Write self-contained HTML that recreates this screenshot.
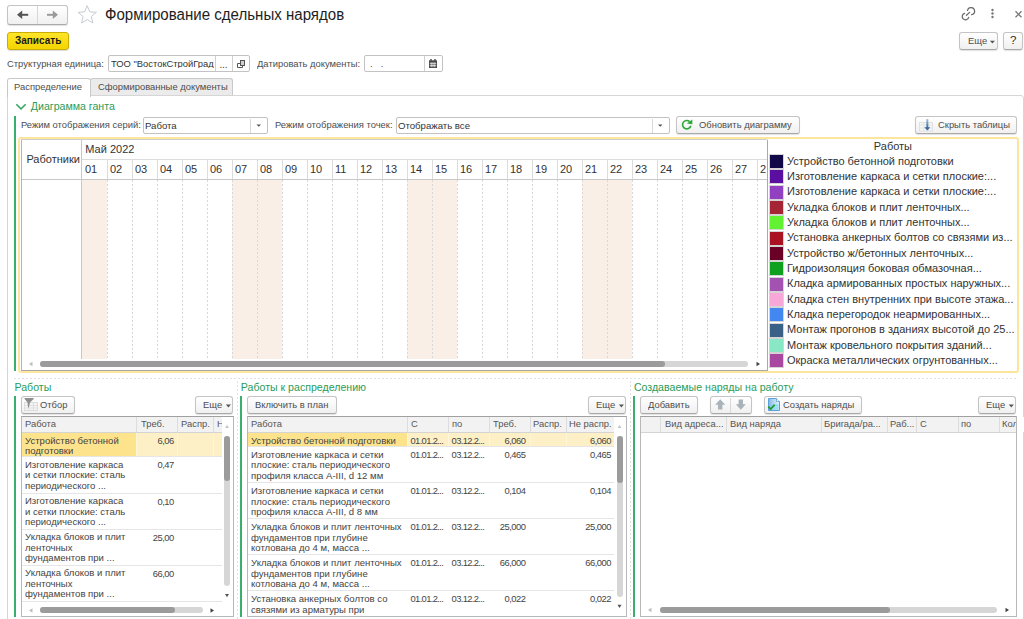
<!DOCTYPE html><html><head><meta charset="utf-8"><style>
html,body{margin:0;padding:0;background:#fff;width:1024px;height:619px;overflow:hidden;position:relative;font-family:"Liberation Sans",sans-serif;color:#4d4d4d}
.t{position:absolute;line-height:1;white-space:nowrap}
.r{position:absolute;box-sizing:border-box}
.btn{position:absolute;box-sizing:border-box;border:1px solid #c4c4c4;border-bottom-color:#a9a9a9;border-radius:3px;background:linear-gradient(#ffffff,#f0f0f0);box-shadow:0 1px 1px rgba(0,0,0,.12)}
svg{position:absolute;overflow:visible}
</style></head><body>

<div class="btn" style="left:7px;top:5px;width:61px;height:20px;"></div>
<div class="r" style="left:37px;top:6px;width:1px;height:18px;background:#d8d8d8"></div>
<svg style="left:0;top:0" width="1024" height="30"><path d="M21 14.8 H28.2" stroke="#555" stroke-width="2"/><path d="M17 14.8 L22.2 10.6 V19 Z" fill="#555"/><path d="M47 14.8 H54" stroke="#9a9a9a" stroke-width="2"/><path d="M58 14.8 L52.8 10.6 V19 Z" fill="#9a9a9a"/><path d="M87.2 5.7 L89.8 11.9 L96.4 12.3 L91.3 16.6 L92.9 23 L87.2 19.6 L81.5 23 L83.1 16.6 L78 12.3 L84.6 11.9 Z" stroke="#c6ccd2" stroke-width="1" fill="#fff"/><g stroke="#6a6a6a" stroke-width="1.25" fill="none" stroke-linecap="round"><path d="M967.5 10.4 A3.6 3.6 0 1 1 971.6 14.7"/><path d="M964.6 13.3 A3.3 3.3 0 1 0 968.7 17.3"/><path d="M966.5 15.3 L969.6 12.4"/></g><circle cx="992.5" cy="10" r="1.2" fill="#777"/><circle cx="992.5" cy="13.5" r="1.2" fill="#777"/><circle cx="992.5" cy="17" r="1.2" fill="#777"/><path d="M1015.5 11.3 L1021.5 17.3 M1021.5 11.3 L1015.5 17.3" stroke="#777" stroke-width="1.3"/></svg>
<div class="t " style="left:104.5px;top:6.99px;font-size:15.6px;color:#1e1e1e;transform:scaleX(0.966);transform-origin:0 0;">Формирование сдельных нарядов</div>
<div class="r" style="left:7px;top:32px;width:62px;height:17.5px;border:1px solid #c9ad00;border-radius:3px;background:linear-gradient(#ffe52a,#f4d400);box-shadow:0 1px 1px rgba(0,0,0,.15)"></div>
<div class="t " style="left:15px;top:36.03px;font-size:10px;color:#1a1a1a;font-weight:bold;">Записать</div>
<div class="btn" style="left:959px;top:32px;width:38.5px;height:18px;"></div>
<div class="t " style="left:967.8px;top:36.29px;font-size:9.7px;transform:scaleX(0.97);transform-origin:0 0;">Еще</div>
<svg style="left:0;top:0" width="1024" height="60"><path d="M989.9 40.8 L994.9 40.8 L992.4 43.6 Z" fill="#555"/></svg>
<div class="btn" style="left:1003px;top:32px;width:19.5px;height:18px;"></div>
<div class="t " style="left:1010px;top:35.27px;font-size:11.5px;color:#2a2a2a;">?</div>
<div class="t " style="left:7px;top:58.79px;font-size:9.7px;transform:scaleX(0.97);transform-origin:0 0;">Структурная единица:</div>
<div class="r" style="left:108px;top:55px;width:142px;height:17px;border:1px solid #c2c2c2;border-radius:2px;background:#fff"></div>
<div class="r" style="left:215px;top:56px;width:1px;height:15px;background:#cfcfcf"></div>
<div class="r" style="left:232px;top:56px;width:1px;height:15px;background:#cfcfcf"></div>
<div class="t" style="left:111px;top:59px;width:103px;overflow:hidden;font-size:9.4px;color:#333">ТОО "ВостокСтройГрад"</div>
<div class="t " style="left:219.5px;top:59.83px;font-size:10px;color:#444;letter-spacing:-0.2px">...</div>
<svg style="left:0;top:0" width="1024" height="80"><path d="M240.5 63.5 H237.5 V67.5 H242.5 V65.5" fill="none" stroke="#555" stroke-width="1"/><rect x="240.5" y="60.5" width="4" height="5" fill="#d0d0d0" stroke="#555" stroke-width="1"/></svg>
<div class="t " style="left:257px;top:58.79px;font-size:9.7px;transform:scaleX(0.97);transform-origin:0 0;">Датировать документы:</div>
<div class="r" style="left:364px;top:55px;width:79px;height:17px;border:1px solid #c2c2c2;border-radius:2px;background:#fff"></div>
<div class="r" style="left:424px;top:56px;width:1px;height:15px;background:#cfcfcf"></div>
<div class="t " style="left:370px;top:59.04px;font-size:9.4px;color:#555;letter-spacing:1.2px">. &thinsp;.</div>
<svg style="left:0;top:0" width="1024" height="80"><rect x="429" y="60.3" width="8" height="7.7" fill="#4a4a4a"/><path d="M429.8 63.3 H436.2 M429.8 65.6 H436.2" stroke="#fff" stroke-width="0.7"/><path d="M431.2 62.5 V67.2 M433 62.5 V67.2 M434.8 62.5 V67.2" stroke="#fff" stroke-width="0.7"/><path d="M431 59 V61.5 M435 59 V61.5" stroke="#4a4a4a" stroke-width="1.4"/></svg>
<div class="r" style="left:90px;top:78px;width:143px;height:17.5px;border:1px solid #c9c9c9;border-bottom:none;border-radius:3px 3px 0 0;background:#ebebeb"></div>
<div class="r" style="left:7px;top:95px;width:1017px;height:540px;border:1px solid #d6d6d6;border-radius:0 3px 0 0"></div>
<div class="r" style="left:7px;top:77.5px;width:83.5px;height:19px;border:1px solid #c9c9c9;border-bottom:none;border-radius:3px 3px 0 0;background:#fff"></div>
<div class="t " style="left:14.2px;top:81.59px;font-size:9.7px;transform:scaleX(0.97);transform-origin:0 0;">Распределение</div>
<div class="t " style="left:97.6px;top:81.79px;font-size:9.7px;transform:scaleX(0.97);transform-origin:0 0;">Сформированные документы</div>
<svg style="left:0;top:0" width="1024" height="120"><path d="M16.3 104.2 L21 108.9 L25.7 104.2" stroke="#3aa864" stroke-width="1.6" fill="none"/></svg>
<div class="t " style="left:30.8px;top:101.43px;font-size:10.6px;color:#2a9c5a;">Диаграмма ганта</div>
<div class="r" style="left:14px;top:116px;width:2px;height:254.5px;background:#3aae6c"></div>
<div class="t " style="left:20.5px;top:120.19px;font-size:9.7px;transform:scaleX(0.97);transform-origin:0 0;">Режим отображения серий:</div>
<div class="r" style="left:143px;top:117px;width:124.5px;height:16.5px;border:1px solid #c2c2c2;border-radius:2px;background:#fff"></div>
<div class="r" style="left:250px;top:118.5px;width:1px;height:14px;background:#d8d8d8"></div>
<div class="t " style="left:145px;top:120.87px;font-size:9.6px;color:#333;">Работа</div>
<div class="t " style="left:274.8px;top:120.19px;font-size:9.7px;transform:scaleX(0.97);transform-origin:0 0;">Режим отображения точек:</div>
<div class="r" style="left:396px;top:117px;width:273.5px;height:16.5px;border:1px solid #c2c2c2;border-radius:2px;background:#fff"></div>
<div class="r" style="left:651.5px;top:118.5px;width:1px;height:14px;background:#d8d8d8"></div>
<div class="t " style="left:398px;top:120.87px;font-size:9.6px;color:#333;">Отображать все</div>
<svg style="left:0;top:0" width="1024" height="140"><path d="M256.5 124.5 L261 124.5 L258.75 126.8 Z" fill="#555"/><path d="M658 124.5 L662.5 124.5 L660.25 126.8 Z" fill="#555"/></svg>
<div class="btn" style="left:676px;top:116px;width:123.5px;height:17.5px;"></div>
<svg style="left:0;top:0" width="1024" height="140"><path d="M689.6 121.6 A4.2 4.2 0 1 0 690.8 125.8" stroke="#2aa838" stroke-width="1.6" fill="none"/><path d="M686.8 123.4 L692.3 119.6 L692.3 124.2 Z" fill="#2aa838"/></svg>
<div class="t " style="left:699px;top:119.79px;font-size:9.7px;transform:scaleX(0.97);transform-origin:0 0;">Обновить диаграмму</div>
<div class="btn" style="left:915px;top:116px;width:101.5px;height:17.5px;"></div>
<svg style="left:0;top:0" width="1024" height="140"><rect x="919.5" y="122.5" width="13" height="8.5" fill="#f6f6f6" stroke="#e0e0e0"/><path d="M919.5 125 H932.5 M919.5 128 H932.5 M924 122.5 V131 M928.5 122.5 V131" stroke="#e4e4e4" stroke-width="1"/><defs><linearGradient id="ag" x1="0" y1="0" x2="0" y2="1"><stop offset="0" stop-color="#a8c4de"/><stop offset="1" stop-color="#3a6aa4"/></linearGradient></defs><rect x="926.3" y="119" width="2" height="9" fill="url(#ag)"/><path d="M924.3 127.3 L927.3 130.6 L930.3 127.3 Z" fill="#3a6aa4"/></svg>
<div class="t " style="left:938px;top:119.79px;font-size:9.7px;transform:scaleX(0.97);transform-origin:0 0;">Скрыть таблицы</div>
<div class="r" style="left:18px;top:137px;width:1001px;height:235.5px;border:2px solid #fce59c;border-radius:3px"></div>
<div class="r" style="left:21px;top:139px;width:747px;height:231.5px;border:1px solid #b4b4b4;border-top-color:#cfcfcf;border-right-color:#a8a8a8;border-bottom-color:#a8a8a8;border-radius:0 2px 0 0"></div>
<div class="r" style="left:82px;top:179.5px;width:25px;height:179px;background:#f9efe6"></div>
<div class="r" style="left:232px;top:179.5px;width:25px;height:179px;background:#f9efe6"></div>
<div class="r" style="left:257px;top:179.5px;width:25px;height:179px;background:#f9efe6"></div>
<div class="r" style="left:407px;top:179.5px;width:25px;height:179px;background:#f9efe6"></div>
<div class="r" style="left:432px;top:179.5px;width:25px;height:179px;background:#f9efe6"></div>
<div class="r" style="left:582px;top:179.5px;width:25px;height:179px;background:#f9efe6"></div>
<div class="r" style="left:607px;top:179.5px;width:25px;height:179px;background:#f9efe6"></div>
<div class="r" style="left:22px;top:179px;width:745px;height:1px;background:#c8c8c8"></div>
<div class="r" style="left:82px;top:159px;width:685px;height:1px;background:#dcdcdc"></div>
<div class="r" style="left:81px;top:140px;width:1px;height:218.5px;background:#c8c8c8"></div>
<div class="r" style="left:106.5px;top:160px;width:1px;height:19px;background:#dcdcdc"></div>
<div class="r" style="left:106.5px;top:180px;width:1px;height:178.5px;background:repeating-linear-gradient(180deg,#d8d8d8 0 2px,transparent 2px 4px)"></div>
<div class="r" style="left:131.5px;top:160px;width:1px;height:19px;background:#dcdcdc"></div>
<div class="r" style="left:131.5px;top:180px;width:1px;height:178.5px;background:repeating-linear-gradient(180deg,#d8d8d8 0 2px,transparent 2px 4px)"></div>
<div class="r" style="left:156.5px;top:160px;width:1px;height:19px;background:#dcdcdc"></div>
<div class="r" style="left:156.5px;top:180px;width:1px;height:178.5px;background:repeating-linear-gradient(180deg,#d8d8d8 0 2px,transparent 2px 4px)"></div>
<div class="r" style="left:181.5px;top:160px;width:1px;height:19px;background:#dcdcdc"></div>
<div class="r" style="left:181.5px;top:180px;width:1px;height:178.5px;background:repeating-linear-gradient(180deg,#d8d8d8 0 2px,transparent 2px 4px)"></div>
<div class="r" style="left:206.5px;top:160px;width:1px;height:19px;background:#dcdcdc"></div>
<div class="r" style="left:206.5px;top:180px;width:1px;height:178.5px;background:repeating-linear-gradient(180deg,#d8d8d8 0 2px,transparent 2px 4px)"></div>
<div class="r" style="left:231.5px;top:160px;width:1px;height:19px;background:#dcdcdc"></div>
<div class="r" style="left:231.5px;top:180px;width:1px;height:178.5px;background:repeating-linear-gradient(180deg,#d8d8d8 0 2px,transparent 2px 4px)"></div>
<div class="r" style="left:256.5px;top:160px;width:1px;height:19px;background:#dcdcdc"></div>
<div class="r" style="left:256.5px;top:180px;width:1px;height:178.5px;background:repeating-linear-gradient(180deg,#d8d8d8 0 2px,transparent 2px 4px)"></div>
<div class="r" style="left:281.5px;top:160px;width:1px;height:19px;background:#dcdcdc"></div>
<div class="r" style="left:281.5px;top:180px;width:1px;height:178.5px;background:repeating-linear-gradient(180deg,#d8d8d8 0 2px,transparent 2px 4px)"></div>
<div class="r" style="left:306.5px;top:160px;width:1px;height:19px;background:#dcdcdc"></div>
<div class="r" style="left:306.5px;top:180px;width:1px;height:178.5px;background:repeating-linear-gradient(180deg,#d8d8d8 0 2px,transparent 2px 4px)"></div>
<div class="r" style="left:331.5px;top:160px;width:1px;height:19px;background:#dcdcdc"></div>
<div class="r" style="left:331.5px;top:180px;width:1px;height:178.5px;background:repeating-linear-gradient(180deg,#d8d8d8 0 2px,transparent 2px 4px)"></div>
<div class="r" style="left:356.5px;top:160px;width:1px;height:19px;background:#dcdcdc"></div>
<div class="r" style="left:356.5px;top:180px;width:1px;height:178.5px;background:repeating-linear-gradient(180deg,#d8d8d8 0 2px,transparent 2px 4px)"></div>
<div class="r" style="left:381.5px;top:160px;width:1px;height:19px;background:#dcdcdc"></div>
<div class="r" style="left:381.5px;top:180px;width:1px;height:178.5px;background:repeating-linear-gradient(180deg,#d8d8d8 0 2px,transparent 2px 4px)"></div>
<div class="r" style="left:406.5px;top:160px;width:1px;height:19px;background:#dcdcdc"></div>
<div class="r" style="left:406.5px;top:180px;width:1px;height:178.5px;background:repeating-linear-gradient(180deg,#d8d8d8 0 2px,transparent 2px 4px)"></div>
<div class="r" style="left:431.5px;top:160px;width:1px;height:19px;background:#dcdcdc"></div>
<div class="r" style="left:431.5px;top:180px;width:1px;height:178.5px;background:repeating-linear-gradient(180deg,#d8d8d8 0 2px,transparent 2px 4px)"></div>
<div class="r" style="left:456.5px;top:160px;width:1px;height:19px;background:#dcdcdc"></div>
<div class="r" style="left:456.5px;top:180px;width:1px;height:178.5px;background:repeating-linear-gradient(180deg,#d8d8d8 0 2px,transparent 2px 4px)"></div>
<div class="r" style="left:481.5px;top:160px;width:1px;height:19px;background:#dcdcdc"></div>
<div class="r" style="left:481.5px;top:180px;width:1px;height:178.5px;background:repeating-linear-gradient(180deg,#d8d8d8 0 2px,transparent 2px 4px)"></div>
<div class="r" style="left:506.5px;top:160px;width:1px;height:19px;background:#dcdcdc"></div>
<div class="r" style="left:506.5px;top:180px;width:1px;height:178.5px;background:repeating-linear-gradient(180deg,#d8d8d8 0 2px,transparent 2px 4px)"></div>
<div class="r" style="left:531.5px;top:160px;width:1px;height:19px;background:#dcdcdc"></div>
<div class="r" style="left:531.5px;top:180px;width:1px;height:178.5px;background:repeating-linear-gradient(180deg,#d8d8d8 0 2px,transparent 2px 4px)"></div>
<div class="r" style="left:556.5px;top:160px;width:1px;height:19px;background:#dcdcdc"></div>
<div class="r" style="left:556.5px;top:180px;width:1px;height:178.5px;background:repeating-linear-gradient(180deg,#d8d8d8 0 2px,transparent 2px 4px)"></div>
<div class="r" style="left:581.5px;top:160px;width:1px;height:19px;background:#dcdcdc"></div>
<div class="r" style="left:581.5px;top:180px;width:1px;height:178.5px;background:repeating-linear-gradient(180deg,#d8d8d8 0 2px,transparent 2px 4px)"></div>
<div class="r" style="left:606.5px;top:160px;width:1px;height:19px;background:#dcdcdc"></div>
<div class="r" style="left:606.5px;top:180px;width:1px;height:178.5px;background:repeating-linear-gradient(180deg,#d8d8d8 0 2px,transparent 2px 4px)"></div>
<div class="r" style="left:631.5px;top:160px;width:1px;height:19px;background:#dcdcdc"></div>
<div class="r" style="left:631.5px;top:180px;width:1px;height:178.5px;background:repeating-linear-gradient(180deg,#d8d8d8 0 2px,transparent 2px 4px)"></div>
<div class="r" style="left:656.5px;top:160px;width:1px;height:19px;background:#dcdcdc"></div>
<div class="r" style="left:656.5px;top:180px;width:1px;height:178.5px;background:repeating-linear-gradient(180deg,#d8d8d8 0 2px,transparent 2px 4px)"></div>
<div class="r" style="left:681.5px;top:160px;width:1px;height:19px;background:#dcdcdc"></div>
<div class="r" style="left:681.5px;top:180px;width:1px;height:178.5px;background:repeating-linear-gradient(180deg,#d8d8d8 0 2px,transparent 2px 4px)"></div>
<div class="r" style="left:706.5px;top:160px;width:1px;height:19px;background:#dcdcdc"></div>
<div class="r" style="left:706.5px;top:180px;width:1px;height:178.5px;background:repeating-linear-gradient(180deg,#d8d8d8 0 2px,transparent 2px 4px)"></div>
<div class="r" style="left:731.5px;top:160px;width:1px;height:19px;background:#dcdcdc"></div>
<div class="r" style="left:731.5px;top:180px;width:1px;height:178.5px;background:repeating-linear-gradient(180deg,#d8d8d8 0 2px,transparent 2px 4px)"></div>
<div class="r" style="left:756.5px;top:160px;width:1px;height:19px;background:#dcdcdc"></div>
<div class="r" style="left:756.5px;top:180px;width:1px;height:178.5px;background:repeating-linear-gradient(180deg,#d8d8d8 0 2px,transparent 2px 4px)"></div>
<div class="t " style="left:26.4px;top:154.19px;font-size:11px;color:#333;">Работники</div>
<div class="t " style="left:85.3px;top:144.49px;font-size:11px;color:#333;">Май 2022</div>
<div class="t " style="left:85px;top:164.29px;font-size:11px;color:#333;">01</div>
<div class="t " style="left:110px;top:164.29px;font-size:11px;color:#333;">02</div>
<div class="t " style="left:135px;top:164.29px;font-size:11px;color:#333;">03</div>
<div class="t " style="left:160px;top:164.29px;font-size:11px;color:#333;">04</div>
<div class="t " style="left:185px;top:164.29px;font-size:11px;color:#333;">05</div>
<div class="t " style="left:210px;top:164.29px;font-size:11px;color:#333;">06</div>
<div class="t " style="left:235px;top:164.29px;font-size:11px;color:#333;">07</div>
<div class="t " style="left:260px;top:164.29px;font-size:11px;color:#333;">08</div>
<div class="t " style="left:285px;top:164.29px;font-size:11px;color:#333;">09</div>
<div class="t " style="left:310px;top:164.29px;font-size:11px;color:#333;">10</div>
<div class="t " style="left:335px;top:164.29px;font-size:11px;color:#333;">11</div>
<div class="t " style="left:360px;top:164.29px;font-size:11px;color:#333;">12</div>
<div class="t " style="left:385px;top:164.29px;font-size:11px;color:#333;">13</div>
<div class="t " style="left:410px;top:164.29px;font-size:11px;color:#333;">14</div>
<div class="t " style="left:435px;top:164.29px;font-size:11px;color:#333;">15</div>
<div class="t " style="left:460px;top:164.29px;font-size:11px;color:#333;">16</div>
<div class="t " style="left:485px;top:164.29px;font-size:11px;color:#333;">17</div>
<div class="t " style="left:510px;top:164.29px;font-size:11px;color:#333;">18</div>
<div class="t " style="left:535px;top:164.29px;font-size:11px;color:#333;">19</div>
<div class="t " style="left:560px;top:164.29px;font-size:11px;color:#333;">20</div>
<div class="t " style="left:585px;top:164.29px;font-size:11px;color:#333;">21</div>
<div class="t " style="left:610px;top:164.29px;font-size:11px;color:#333;">22</div>
<div class="t " style="left:635px;top:164.29px;font-size:11px;color:#333;">23</div>
<div class="t " style="left:660px;top:164.29px;font-size:11px;color:#333;">24</div>
<div class="t " style="left:685px;top:164.29px;font-size:11px;color:#333;">25</div>
<div class="t " style="left:710px;top:164.29px;font-size:11px;color:#333;">26</div>
<div class="t " style="left:735px;top:164.29px;font-size:11px;color:#333;">27</div>
<div class="t" style="left:760px;top:164.29px;font-size:11px;color:#333;width:6px;overflow:hidden">28</div>
<svg style="left:0;top:0" width="1024" height="380"><path d="M29 364 L32.5 361.8 L32.5 366.2 Z" fill="#bdbdbd"/><path d="M756.5 361.8 L760 364 L756.5 366.2 Z" fill="#444"/></svg>
<div class="r" style="left:40px;top:360.8px;width:708px;height:6px;background:#d6d6d6;border-radius:3px"></div>
<div class="r" style="left:40px;top:360.8px;width:624.5px;height:6px;background:#9b9b9b;border-radius:3px"></div>
<div class="t " style="left:873.8px;top:140.59px;font-size:11px;color:#333;">Работы</div>
<div class="r" style="left:770px;top:155.00px;width:13px;height:13px;background:#110848;outline:1px solid #d4d4d4"></div>
<div class="t " style="left:787px;top:155.69px;font-size:11px;color:#333;">Устройство бетонной подготовки</div>
<div class="r" style="left:770px;top:170.33px;width:13px;height:13px;background:#5a0fa0;outline:1px solid #d4d4d4"></div>
<div class="t " style="left:787px;top:171.02px;font-size:11px;color:#333;">Изготовление каркаса и сетки плоские:...</div>
<div class="r" style="left:770px;top:185.66px;width:13px;height:13px;background:#9040c0;outline:1px solid #d4d4d4"></div>
<div class="t " style="left:787px;top:186.35px;font-size:11px;color:#333;">Изготовление каркаса и сетки плоские:...</div>
<div class="r" style="left:770px;top:200.99px;width:13px;height:13px;background:#a52535;outline:1px solid #d4d4d4"></div>
<div class="t " style="left:787px;top:201.68px;font-size:11px;color:#333;">Укладка блоков и плит ленточных...</div>
<div class="r" style="left:770px;top:216.32px;width:13px;height:13px;background:#62f232;outline:1px solid #d4d4d4"></div>
<div class="t " style="left:787px;top:217.01px;font-size:11px;color:#333;">Укладка блоков и плит ленточных...</div>
<div class="r" style="left:770px;top:231.65px;width:13px;height:13px;background:#a81222;outline:1px solid #d4d4d4"></div>
<div class="t " style="left:787px;top:232.34px;font-size:11px;color:#333;">Установка анкерных болтов со связями из...</div>
<div class="r" style="left:770px;top:246.98px;width:13px;height:13px;background:#6a0026;outline:1px solid #d4d4d4"></div>
<div class="t " style="left:787px;top:247.67px;font-size:11px;color:#333;">Устройство ж/бетонных ленточных...</div>
<div class="r" style="left:770px;top:262.31px;width:13px;height:13px;background:#10a020;outline:1px solid #d4d4d4"></div>
<div class="t " style="left:787px;top:263.00px;font-size:11px;color:#333;">Гидроизоляция боковая обмазочная...</div>
<div class="r" style="left:770px;top:277.64px;width:13px;height:13px;background:#a452b2;outline:1px solid #d4d4d4"></div>
<div class="t " style="left:787px;top:278.33px;font-size:11px;color:#333;">Кладка армированных простых наружных...</div>
<div class="r" style="left:770px;top:292.97px;width:13px;height:13px;background:#f8a8d8;outline:1px solid #d4d4d4"></div>
<div class="t " style="left:787px;top:293.66px;font-size:11px;color:#333;">Кладка стен внутренних при высоте этажа...</div>
<div class="r" style="left:770px;top:308.30px;width:13px;height:13px;background:#4288f0;outline:1px solid #d4d4d4"></div>
<div class="t " style="left:787px;top:308.99px;font-size:11px;color:#333;">Кладка перегородок неармированных...</div>
<div class="r" style="left:770px;top:323.63px;width:13px;height:13px;background:#3a6088;outline:1px solid #d4d4d4"></div>
<div class="t " style="left:787px;top:324.32px;font-size:11px;color:#333;">Монтаж прогонов в зданиях высотой до 25...</div>
<div class="r" style="left:770px;top:338.96px;width:13px;height:13px;background:#88e8c6;outline:1px solid #d4d4d4"></div>
<div class="t " style="left:787px;top:339.65px;font-size:11px;color:#333;">Монтаж кровельного покрытия зданий...</div>
<div class="r" style="left:770px;top:354.29px;width:13px;height:13px;background:#a848a0;outline:1px solid #d4d4d4"></div>
<div class="t " style="left:787px;top:354.98px;font-size:11px;color:#333;">Окраска металлических огрунтованных...</div>
<div class="r" style="left:14px;top:378px;width:1003px;height:1px;background:repeating-linear-gradient(90deg,#e0e0e0 0 2px,transparent 2px 4px)"></div>
<div class="r" style="left:237px;top:381px;width:1px;height:238px;background:repeating-linear-gradient(180deg,#e0e0e0 0 2px,transparent 2px 4px)"></div>
<div class="r" style="left:630px;top:381px;width:1px;height:238px;background:repeating-linear-gradient(180deg,#e0e0e0 0 2px,transparent 2px 4px)"></div>
<div class="t " style="left:14.5px;top:382.23px;font-size:10.6px;color:#2a9c5a;">Работы</div>
<div class="t " style="left:240.8px;top:382.23px;font-size:10.6px;color:#2a9c5a;">Работы к распределению</div>
<div class="t " style="left:633.9px;top:382.23px;font-size:10.6px;color:#2a9c5a;">Создаваемые наряды на работу</div>
<div class="r" style="left:14px;top:396px;width:2px;height:221px;background:#3aae6c"></div>
<div class="r" style="left:240px;top:396px;width:2px;height:221px;background:#3aae6c"></div>
<div class="r" style="left:633px;top:396px;width:2px;height:221px;background:#3aae6c"></div>
<div class="btn" style="left:21px;top:396px;width:54px;height:17.5px;"></div>
<svg style="left:0;top:0" width="1024" height="619"><rect x="24.5" y="402.5" width="13" height="8" fill="#f4f4f4" stroke="#dcdcdc"/><path d="M24.5 405.5 H37.5 M24.5 408 H37.5 M29 402.5 V410.5 M33.5 402.5 V410.5" stroke="#e0e0e0"/><path d="M24.6 398 H33.6 V399 L30 402.5 L28.8 407.5 L28 407.5 L27.6 402.5 L24.6 399 Z" fill="#8e8e8e"/></svg>
<div class="t " style="left:40px;top:399.99px;font-size:9.7px;transform:scaleX(0.97);transform-origin:0 0;">Отбор</div>
<div class="btn" style="left:195.4px;top:396px;width:38px;height:17.5px;"></div>
<div class="t " style="left:203.20000000000002px;top:399.99px;font-size:9.7px;transform:scaleX(0.97);transform-origin:0 0;">Еще</div>
<svg style="left:0;top:0" width="1024" height="619"><path d="M225.9 404.6 L230.9 404.6 L228.4 407.4 Z" fill="#555"/></svg>
<div class="btn" style="left:247px;top:396px;width:89.5px;height:17.5px;"></div>
<div class="t " style="left:255px;top:399.99px;font-size:9.7px;transform:scaleX(0.97);transform-origin:0 0;">Включить в план</div>
<div class="btn" style="left:588.4px;top:396px;width:38px;height:17.5px;"></div>
<div class="t " style="left:596.1999999999999px;top:399.99px;font-size:9.7px;transform:scaleX(0.97);transform-origin:0 0;">Еще</div>
<svg style="left:0;top:0" width="1024" height="619"><path d="M618.9 404.6 L623.9 404.6 L621.4 407.4 Z" fill="#555"/></svg>
<div class="btn" style="left:640px;top:396px;width:58px;height:17.5px;"></div>
<div class="t " style="left:648px;top:399.99px;font-size:9.7px;transform:scaleX(0.97);transform-origin:0 0;">Добавить</div>
<div class="btn" style="left:709.5px;top:396px;width:42.5px;height:17.5px;"></div>
<div class="r" style="left:730px;top:397.5px;width:1px;height:15px;background:#d8d8d8"></div>
<svg style="left:0;top:0" width="1024" height="619"><path d="M720.2 399.3 L725.2 404.8 H722.4 V409.6 H718 V404.8 H715.2 Z" fill="#a9b3bb"/><path d="M740.8 409.8 L745.8 404.3 H743 V399.5 H738.6 V404.3 H735.8 Z" fill="#a9b3bb"/></svg>
<div class="btn" style="left:763.5px;top:396px;width:98px;height:17.5px;"></div>
<svg style="left:0;top:0" width="1024" height="619"><defs><linearGradient id="dg" x1="0" y1="0" x2="1" y2="0"><stop offset="0" stop-color="#7fb6e6"/><stop offset="0.35" stop-color="#a9d0f0"/><stop offset="1" stop-color="#e4f2fc"/></linearGradient></defs><path d="M768.5 398.5 H776.5 L779.5 401.5 V410.5 H768.5 Z" fill="url(#dg)" stroke="#5d9fd8" stroke-width="1"/><path d="M776.5 398.5 V401.5 H779.5" fill="#fff" stroke="#5d9fd8" stroke-width="0.8"/><path d="M772.5 404.5 H778.5 V409.5 H772.5 Z" fill="#7fd4f4"/><path d="M772.5 406.3 H778.5 M772.5 408 H778.5" stroke="#c8ecfa" stroke-width="0.7"/><path d="M768.3 406.6 L770.6 409 L774.6 404.8" stroke="#1e9a2a" stroke-width="1.8" fill="none"/></svg>
<div class="t " style="left:783.2px;top:399.99px;font-size:9.7px;transform:scaleX(0.97);transform-origin:0 0;">Создать наряды</div>
<div class="btn" style="left:978.3px;top:396px;width:38px;height:17.5px;"></div>
<div class="t " style="left:986.0999999999999px;top:399.99px;font-size:9.7px;transform:scaleX(0.97);transform-origin:0 0;">Еще</div>
<svg style="left:0;top:0" width="1024" height="619"><path d="M1008.8 404.6 L1013.8 404.6 L1011.3 407.4 Z" fill="#555"/></svg>
<div class="r" style="left:21px;top:416px;width:212.5px;height:201px;border:1px solid #b8b8b8;border-top-color:#a0a0a0;background:#fff"></div>
<div class="r" style="left:22px;top:417px;width:200px;height:15px;background:#f2f2f2"></div>
<div class="r" style="left:22px;top:432px;width:200px;height:1px;background:#d4d4d4"></div>
<div class="r" style="left:136px;top:417px;width:1px;height:15px;background:#dcdcdc"></div>
<div class="r" style="left:177px;top:417px;width:1px;height:15px;background:#dcdcdc"></div>
<div class="r" style="left:213px;top:417px;width:1px;height:15px;background:#dcdcdc"></div>
<div class="t " style="left:25px;top:419.09px;font-size:9.7px;color:#555;transform:scaleX(0.97);transform-origin:0 0;">Работа</div>
<div class="t " style="left:141px;top:419.09px;font-size:9.7px;color:#555;transform:scaleX(0.97);transform-origin:0 0;">Треб.</div>
<div class="t " style="left:181px;top:419.09px;font-size:9.7px;color:#555;transform:scaleX(0.97);transform-origin:0 0;">Распр.</div>
<div class="t " style="left:216.7px;top:419.09px;font-size:9.7px;color:#555;transform:scaleX(0.97);transform-origin:0 0;">Н</div>
<div class="r" style="left:222px;top:417px;width:10.5px;height:15px;background:#fff"></div>
<svg style="left:0;top:0" width="1024" height="619"><path d="M225 428 L227 424.8 L229 428 Z" fill="#c8c8c8"/><path d="M225 594 L227 597.2 L229 594 Z" fill="#555"/><path d="M29 610.5 L32.5 608.3 L32.5 612.7 Z" fill="#bdbdbd"/><path d="M210.5 608.3 L214 610.5 L210.5 612.7 Z" fill="#444"/></svg>
<div class="r" style="left:22px;top:433px;width:114px;height:24px;background:#fde38c"></div>
<div class="r" style="left:136px;top:433px;width:86px;height:24px;background:#fdf0c6"></div>
<div class="r" style="left:136px;top:433px;width:1px;height:24px;background:#fff6d8"></div>
<div class="r" style="left:177px;top:433px;width:1px;height:24px;background:#fff6d8"></div>
<div class="r" style="left:213px;top:433px;width:1px;height:24px;background:#fff6d8"></div>
<div class="r" style="left:22px;top:456px;width:200px;height:1px;background:#e6e6e6"></div>
<div class="t " style="left:25px;top:435.92px;font-size:9.55px;color:#444;">Устройство бетонной</div>
<div class="t " style="left:25px;top:446.37px;font-size:9.55px;color:#444;">подготовки</div>
<div class="t " style="left:133.7px;width:40px;text-align:right;top:436.04px;font-size:9.4px;color:#444;letter-spacing:-0.5px">6,06</div>
<div class="r" style="left:22px;top:492.5px;width:200px;height:1px;background:#e6e6e6"></div>
<div class="t " style="left:25px;top:459.92px;font-size:9.55px;color:#444;">Изготовление каркаса</div>
<div class="t " style="left:25px;top:470.37px;font-size:9.55px;color:#444;">и сетки плоские: сталь</div>
<div class="t " style="left:25px;top:480.82px;font-size:9.55px;color:#444;">периодического ...</div>
<div class="t " style="left:133.7px;width:40px;text-align:right;top:460.04px;font-size:9.4px;color:#444;letter-spacing:-0.5px">0,47</div>
<div class="r" style="left:22px;top:528.5px;width:200px;height:1px;background:#e6e6e6"></div>
<div class="t " style="left:25px;top:496.42px;font-size:9.55px;color:#444;">Изготовление каркаса</div>
<div class="t " style="left:25px;top:506.87px;font-size:9.55px;color:#444;">и сетки плоские: сталь</div>
<div class="t " style="left:25px;top:517.32px;font-size:9.55px;color:#444;">периодического ...</div>
<div class="t " style="left:133.7px;width:40px;text-align:right;top:496.54px;font-size:9.4px;color:#444;letter-spacing:-0.5px">0,10</div>
<div class="r" style="left:22px;top:564.5px;width:200px;height:1px;background:#e6e6e6"></div>
<div class="t " style="left:25px;top:532.42px;font-size:9.55px;color:#444;">Укладка блоков и плит</div>
<div class="t " style="left:25px;top:542.87px;font-size:9.55px;color:#444;">ленточных</div>
<div class="t " style="left:25px;top:553.32px;font-size:9.55px;color:#444;">фундаментов при ...</div>
<div class="t " style="left:133.7px;width:40px;text-align:right;top:532.54px;font-size:9.4px;color:#444;letter-spacing:-0.5px">25,00</div>
<div class="r" style="left:22px;top:600.5px;width:200px;height:1px;background:#e6e6e6"></div>
<div class="t " style="left:25px;top:568.42px;font-size:9.55px;color:#444;">Укладка блоков и плит</div>
<div class="t " style="left:25px;top:578.87px;font-size:9.55px;color:#444;">ленточных</div>
<div class="t " style="left:25px;top:589.32px;font-size:9.55px;color:#444;">фундаментов при ...</div>
<div class="t " style="left:133.7px;width:40px;text-align:right;top:568.54px;font-size:9.4px;color:#444;letter-spacing:-0.5px">66,00</div>
<div class="r" style="left:22px;top:601px;width:200px;height:1px;background:#e6e6e6"></div>
<div class="r" style="left:224.3px;top:435.5px;width:5.5px;height:150.5px;background:#d6d6d6;border-radius:3px"></div>
<div class="r" style="left:224.3px;top:435.5px;width:5.5px;height:45.5px;background:#9b9b9b;border-radius:3px"></div>
<div class="r" style="left:40.3px;top:607.2px;width:162.5px;height:6px;background:#d6d6d6;border-radius:3px"></div>
<div class="r" style="left:40.3px;top:607.2px;width:134.3px;height:6px;background:#9b9b9b;border-radius:3px"></div>
<div class="r" style="left:247px;top:416px;width:379.5px;height:201px;border:1px solid #b8b8b8;border-top-color:#a0a0a0;background:#fff"></div>
<div class="r" style="left:248px;top:417px;width:366.4px;height:15px;background:#f2f2f2"></div>
<div class="r" style="left:248px;top:432px;width:366.4px;height:1px;background:#d4d4d4"></div>
<div class="r" style="left:407px;top:417px;width:1px;height:15px;background:#dcdcdc"></div>
<div class="r" style="left:447.6px;top:417px;width:1px;height:15px;background:#dcdcdc"></div>
<div class="r" style="left:488.6px;top:417px;width:1px;height:15px;background:#dcdcdc"></div>
<div class="r" style="left:529.6px;top:417px;width:1px;height:15px;background:#dcdcdc"></div>
<div class="r" style="left:565.7px;top:417px;width:1px;height:15px;background:#dcdcdc"></div>
<div class="t " style="left:251px;top:419.09px;font-size:9.7px;color:#555;transform:scaleX(0.97);transform-origin:0 0;">Работа</div>
<div class="t " style="left:410.5px;top:419.09px;font-size:9.7px;color:#555;transform:scaleX(0.97);transform-origin:0 0;">С</div>
<div class="t " style="left:451.6px;top:419.09px;font-size:9.7px;color:#555;transform:scaleX(0.97);transform-origin:0 0;">по</div>
<div class="t " style="left:492.6px;top:419.09px;font-size:9.7px;color:#555;transform:scaleX(0.97);transform-origin:0 0;">Треб.</div>
<div class="t " style="left:532.9px;top:419.09px;font-size:9.7px;color:#555;transform:scaleX(0.97);transform-origin:0 0;">Распр.</div>
<div class="t " style="left:568.7px;top:419.09px;font-size:9.7px;color:#555;transform:scaleX(0.97);transform-origin:0 0;">Не распр.</div>
<svg style="left:0;top:0" width="1024" height="619"><path d="M617.5 428 L619.5 424.8 L621.5 428 Z" fill="#c8c8c8"/><path d="M617.5 604.8 L619.5 608 L621.5 604.8 Z" fill="#555"/></svg>
<div class="r" style="left:248px;top:433.3px;width:159px;height:13px;background:#fde38c"></div>
<div class="r" style="left:407px;top:433.3px;width:207.4px;height:13px;background:#fdf0c6"></div>
<div class="r" style="left:407px;top:433.3px;width:1px;height:13px;background:#fff6d8"></div>
<div class="r" style="left:447.6px;top:433.3px;width:1px;height:13px;background:#fff6d8"></div>
<div class="r" style="left:488.6px;top:433.3px;width:1px;height:13px;background:#fff6d8"></div>
<div class="r" style="left:529.6px;top:433.3px;width:1px;height:13px;background:#fff6d8"></div>
<div class="r" style="left:565.7px;top:433.3px;width:1px;height:13px;background:#fff6d8"></div>
<div class="r" style="left:248px;top:446.0px;width:366.4px;height:1px;background:#e6e6e6"></div>
<div class="t " style="left:251px;top:436.22px;font-size:9.55px;color:#444;">Устройство бетонной подготовки</div>
<div class="t " style="left:410.5px;top:436.34px;font-size:9.4px;color:#444;letter-spacing:-0.65px">01.01.2...</div>
<div class="t " style="left:451.6px;top:436.34px;font-size:9.4px;color:#444;letter-spacing:-0.65px">03.12.2...</div>
<div class="t " style="left:485.4px;width:40px;text-align:right;top:436.34px;font-size:9.4px;color:#444;letter-spacing:-0.5px">6,060</div>
<div class="t " style="left:571px;width:40px;text-align:right;top:436.34px;font-size:9.4px;color:#444;letter-spacing:-0.5px">6,060</div>
<div class="r" style="left:248px;top:482.2px;width:366.4px;height:1px;background:#e6e6e6"></div>
<div class="t " style="left:251px;top:449.92px;font-size:9.55px;color:#444;">Изготовление каркаса и сетки</div>
<div class="t " style="left:251px;top:460.37px;font-size:9.55px;color:#444;">плоские: сталь периодического</div>
<div class="t " style="left:251px;top:470.82px;font-size:9.55px;color:#444;">профиля класса A-III, d 12 мм</div>
<div class="t " style="left:410.5px;top:450.04px;font-size:9.4px;color:#444;letter-spacing:-0.65px">01.01.2...</div>
<div class="t " style="left:451.6px;top:450.04px;font-size:9.4px;color:#444;letter-spacing:-0.65px">03.12.2...</div>
<div class="t " style="left:485.4px;width:40px;text-align:right;top:450.04px;font-size:9.4px;color:#444;letter-spacing:-0.5px">0,465</div>
<div class="t " style="left:571px;width:40px;text-align:right;top:450.04px;font-size:9.4px;color:#444;letter-spacing:-0.5px">0,465</div>
<div class="r" style="left:248px;top:518.3px;width:366.4px;height:1px;background:#e6e6e6"></div>
<div class="t " style="left:251px;top:486.12px;font-size:9.55px;color:#444;">Изготовление каркаса и сетки</div>
<div class="t " style="left:251px;top:496.57px;font-size:9.55px;color:#444;">плоские: сталь периодического</div>
<div class="t " style="left:251px;top:507.02px;font-size:9.55px;color:#444;">профиля класса A-III, d 8 мм</div>
<div class="t " style="left:410.5px;top:486.24px;font-size:9.4px;color:#444;letter-spacing:-0.65px">01.01.2...</div>
<div class="t " style="left:451.6px;top:486.24px;font-size:9.4px;color:#444;letter-spacing:-0.65px">03.12.2...</div>
<div class="t " style="left:485.4px;width:40px;text-align:right;top:486.24px;font-size:9.4px;color:#444;letter-spacing:-0.5px">0,104</div>
<div class="t " style="left:571px;width:40px;text-align:right;top:486.24px;font-size:9.4px;color:#444;letter-spacing:-0.5px">0,104</div>
<div class="r" style="left:248px;top:554.3px;width:366.4px;height:1px;background:#e6e6e6"></div>
<div class="t " style="left:251px;top:522.22px;font-size:9.55px;color:#444;">Укладка блоков и плит ленточных</div>
<div class="t " style="left:251px;top:532.67px;font-size:9.55px;color:#444;">фундаментов при глубине</div>
<div class="t " style="left:251px;top:543.12px;font-size:9.55px;color:#444;">котлована до 4 м, масса ...</div>
<div class="t " style="left:410.5px;top:522.34px;font-size:9.4px;color:#444;letter-spacing:-0.65px">01.01.2...</div>
<div class="t " style="left:451.6px;top:522.34px;font-size:9.4px;color:#444;letter-spacing:-0.65px">03.12.2...</div>
<div class="t " style="left:485.4px;width:40px;text-align:right;top:522.34px;font-size:9.4px;color:#444;letter-spacing:-0.5px">25,000</div>
<div class="t " style="left:571px;width:40px;text-align:right;top:522.34px;font-size:9.4px;color:#444;letter-spacing:-0.5px">25,000</div>
<div class="r" style="left:248px;top:590.3px;width:366.4px;height:1px;background:#e6e6e6"></div>
<div class="t " style="left:251px;top:558.22px;font-size:9.55px;color:#444;">Укладка блоков и плит ленточных</div>
<div class="t " style="left:251px;top:568.67px;font-size:9.55px;color:#444;">фундаментов при глубине</div>
<div class="t " style="left:251px;top:579.12px;font-size:9.55px;color:#444;">котлована до 4 м, масса ...</div>
<div class="t " style="left:410.5px;top:558.34px;font-size:9.4px;color:#444;letter-spacing:-0.65px">01.01.2...</div>
<div class="t " style="left:451.6px;top:558.34px;font-size:9.4px;color:#444;letter-spacing:-0.65px">03.12.2...</div>
<div class="t " style="left:485.4px;width:40px;text-align:right;top:558.34px;font-size:9.4px;color:#444;letter-spacing:-0.5px">66,000</div>
<div class="t " style="left:571px;width:40px;text-align:right;top:558.34px;font-size:9.4px;color:#444;letter-spacing:-0.5px">66,000</div>
<div class="t " style="left:251px;top:594.22px;font-size:9.55px;color:#444;">Установка анкерных болтов со</div>
<div class="t " style="left:251px;top:604.67px;font-size:9.55px;color:#444;">связями из арматуры при</div>
<div class="t " style="left:410.5px;top:594.34px;font-size:9.4px;color:#444;letter-spacing:-0.65px">01.01.2...</div>
<div class="t " style="left:451.6px;top:594.34px;font-size:9.4px;color:#444;letter-spacing:-0.65px">03.12.2...</div>
<div class="t " style="left:485.4px;width:40px;text-align:right;top:594.34px;font-size:9.4px;color:#444;letter-spacing:-0.5px">0,022</div>
<div class="t " style="left:571px;width:40px;text-align:right;top:594.34px;font-size:9.4px;color:#444;letter-spacing:-0.5px">0,022</div>
<div class="r" style="left:616.8px;top:436px;width:5.8px;height:160.6px;background:#d6d6d6;border-radius:3px"></div>
<div class="r" style="left:616.8px;top:436px;width:5.8px;height:47.1px;background:#9b9b9b;border-radius:3px"></div>
<div class="r" style="left:640.3px;top:416px;width:376.3px;height:201px;border:1px solid #b8b8b8;border-top-color:#a0a0a0;background:#fff"></div>
<div class="r" style="left:641.3px;top:417px;width:374.30000000000007px;height:15px;background:#f2f2f2"></div>
<div class="r" style="left:641.3px;top:432px;width:374.30000000000007px;height:1px;background:#d4d4d4"></div>
<div class="r" style="left:660.3px;top:417px;width:1px;height:15px;background:#dcdcdc"></div>
<div class="r" style="left:725.6px;top:417px;width:1px;height:15px;background:#dcdcdc"></div>
<div class="r" style="left:820.6px;top:417px;width:1px;height:15px;background:#dcdcdc"></div>
<div class="r" style="left:886.5px;top:417px;width:1px;height:15px;background:#dcdcdc"></div>
<div class="r" style="left:916.4px;top:417px;width:1px;height:15px;background:#dcdcdc"></div>
<div class="r" style="left:957.6px;top:417px;width:1px;height:15px;background:#dcdcdc"></div>
<div class="r" style="left:998.6px;top:417px;width:1px;height:15px;background:#dcdcdc"></div>
<div class="t " style="left:664.7px;top:419.09px;font-size:9.7px;color:#555;transform:scaleX(0.97);transform-origin:0 0;">Вид адреса...</div>
<div class="t " style="left:729.7px;top:419.09px;font-size:9.7px;color:#555;transform:scaleX(0.97);transform-origin:0 0;">Вид наряда</div>
<div class="t " style="left:823.6px;top:419.09px;font-size:9.7px;color:#555;transform:scaleX(0.97);transform-origin:0 0;">Бригада/ра...</div>
<div class="t " style="left:889.5px;top:419.09px;font-size:9.7px;color:#555;transform:scaleX(0.97);transform-origin:0 0;">Раб...</div>
<div class="t " style="left:920.2px;top:419.09px;font-size:9.7px;color:#555;transform:scaleX(0.97);transform-origin:0 0;">С</div>
<div class="t " style="left:961.2px;top:419.09px;font-size:9.7px;color:#555;transform:scaleX(0.97);transform-origin:0 0;">по</div>
<div class="t " style="left:1001.9px;top:419.09px;font-size:9.7px;color:#555;transform:scaleX(0.97);transform-origin:0 0;">Кол</div>
<div class="r" style="left:1015.6px;top:417px;width:8px;height:15px;background:#fff"></div>
<div class="r" style="left:1015.6px;top:416px;width:1px;height:201px;background:#b8b8b8"></div>
<svg style="left:0;top:0" width="1024" height="619"><path d="M648 610 L651.5 607.8 L651.5 612.2 Z" fill="#bdbdbd"/><path d="M1005.5 607.8 L1009 610 L1005.5 612.2 Z" fill="#444"/></svg>
<div class="r" style="left:660px;top:607px;width:337.4px;height:6px;background:#d6d6d6;border-radius:3px"></div>
<div class="r" style="left:660px;top:607px;width:229.7px;height:6px;background:#9b9b9b;border-radius:3px"></div>
</body></html>
